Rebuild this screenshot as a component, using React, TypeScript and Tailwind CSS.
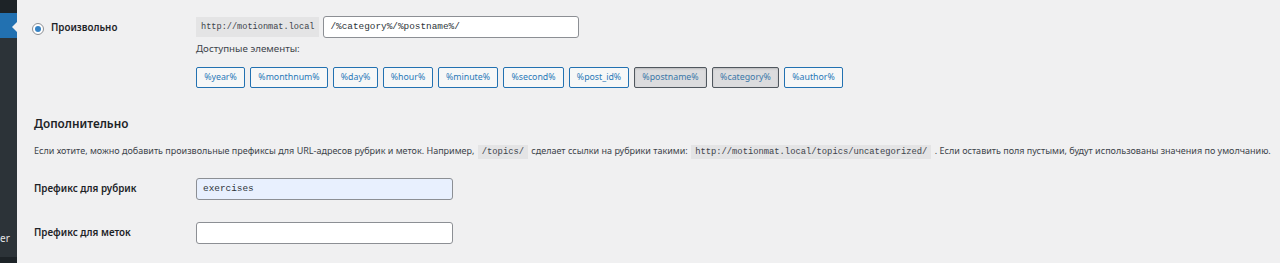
import React from "react";

const tags = [
  { t: "%year%", w: 49, p: false },
  { t: "%monthnum%", w: 78, p: false },
  { t: "%day%", w: 45, p: false },
  { t: "%hour%", w: 50, p: false },
  { t: "%minute%", w: 60, p: false },
  { t: "%second%", w: 61, p: false },
  { t: "%post_id%", w: 60, p: false },
  { t: "%postname%", w: 73, p: true },
  { t: "%category%", w: 67, p: true },
  { t: "%author%", w: 59, p: false },
];

const mono = { fontFamily: '"Liberation Mono", "DejaVu Sans Mono", monospace' };

export default function App() {
  return (
    <div
      className="flex h-[263px] w-[1280px] overflow-hidden bg-[#f0f0f1] text-[#3c434a]"
      style={{ fontFamily: '"Noto Sans", "Open Sans", sans-serif' }}
    >
      {/* sidebar */}
      <div className="flex w-[17px] shrink-0 flex-col bg-[#2c3338]">
        <div className="h-[13px] bg-[#1d2327]" />
        <div className="relative h-[25px] bg-[#2271b1]">
          <div className="absolute right-0 top-[9px] h-0 w-0 border-y-[5px] border-r-[5px] border-y-transparent border-r-[#f0f0f1]" />
        </div>
        <div className="flex-1" />
        <div className="mb-[12px] flex h-[14px] items-center">
          <span className="text-[10px] leading-none text-[#e6e6e7]">er</span>
        </div>
        <div className="h-[6px] bg-[#1d2327]" />
      </div>

      {/* main */}
      <div className="flex-1 pl-[17px] pt-[16px]">
        {/* custom structure row */}
        <div className="flex">
          <div className="flex h-[24px] w-[162px] shrink-0 items-center pt-[1px]">
            <span className="relative ml-[-2px] flex h-[12px] w-[12px] items-center justify-center rounded-full border border-[#8c8f94] bg-white">
              <span className="h-[6px] w-[6px] rounded-full bg-[#3582c4]" />
            </span>
            <span className="ml-[7px] text-[9.8px] font-semibold text-[#1d2327]">Произвольно</span>
          </div>
          <div className="flex flex-col">
            <div className="flex items-center">
              <code className="flex h-[20px] items-center bg-[#e4e4e5] px-[5px] text-[8.6px] text-[#3c434a]" style={mono}>
                http://motionmat.local
              </code>
              <div
                className="ml-[4px] flex h-[22px] w-[256px] items-center rounded-[3px] border border-[#8c8f94] bg-white px-[6px] text-[9.4px] text-[#2c3338]"
                style={mono}
              >
                /%category%/%postname%/
              </div>
            </div>
            <div className="mt-[4px] text-[9.75px] leading-[14px]">Доступные элементы:</div>
            <div className="mt-[11px] flex gap-[5px]">
              {tags.map((b) => (
                <div
                  key={b.t}
                  style={{ width: b.w }}
                  className={
                    "flex h-[21px] items-center justify-center rounded-[2px] border text-[8.8px] " +
                    (b.p
                      ? "border-[#50575e] bg-[#dcdcde] text-[#3a77a8] shadow-[inset_0_1px_2px_rgba(0,0,0,0.15)]"
                      : "border-[#2271b1] bg-[#f6f7f7] text-[#2a79b8]")
                  }
                >
                  {b.t}
                </div>
              ))}
            </div>
          </div>
        </div>

        {/* additional */}
        <h2 className="mt-[26px] text-[11.8px] font-semibold leading-[18px] text-[#1d2327]">Дополнительно</h2>
        <p className="mt-[11px] whitespace-nowrap text-[9px] leading-[16px]">
          Если хотите, можно добавить произвольные префиксы для URL-адресов рубрик и меток. Например,{" "}
          <code className="mx-[1px] bg-[#e4e4e5] px-[4px] py-[2px] text-[8.8px]" style={mono}>
            /topics/
          </code>{" "}
          сделает ссылки на рубрики такими:{" "}
          <code className="mx-[1px] bg-[#e4e4e5] px-[4px] py-[2px] text-[8.8px]" style={mono}>
            http://motionmat.local/topics/uncategorized/
          </code>{" "}
          . Если оставить поля пустыми, будут использованы значения по умолчанию.
        </p>

        <div className="mt-[18px] flex items-center">
          <div className="w-[162px] pt-[1px] text-[9.8px] font-semibold text-[#1d2327]">Префикс для рубрик</div>
          <div
            className="flex h-[22px] w-[257px] items-center rounded-[3px] border border-[#8c8f94] bg-[#e8f0fe] px-[6px] text-[9.4px] text-[#2c3338]"
            style={mono}
          >
            exercises
          </div>
        </div>
        <div className="mt-[22px] flex items-center">
          <div className="w-[162px] pt-[1px] text-[9.8px] font-semibold text-[#1d2327]">Префикс для меток</div>
          <div className="h-[22px] w-[257px] rounded-[3px] border border-[#8c8f94] bg-white" />
        </div>
      </div>
    </div>
  );
}
